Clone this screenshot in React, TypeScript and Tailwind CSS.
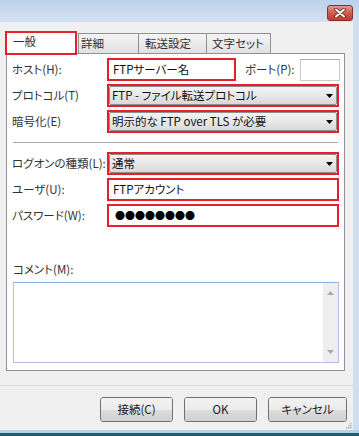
import { ReactNode } from 'react';

const font = "font-['Noto_Sans_CJK_JP',sans-serif] [font-feature-settings:'palt']";

function Arrow() {
  return (
    <svg width="7" height="4" viewBox="0 0 7 4" className="shrink-0">
      <path d="M0 0h7L3.5 4z" fill="#000" />
    </svg>
  );
}

function TextBox({ width, children }: { width: string; children?: ReactNode }) {
  return (
    <div className={`${width} h-[23px] border-2 border-[#e3202b] bg-white flex items-center pl-[4px] text-[11.5px] text-[#111] whitespace-nowrap`}>
      {children}
    </div>
  );
}

function Combo({ value }: { value: string }) {
  return (
    <div className="w-[232px] h-[23px] border-2 border-[#e3202b] flex">
      <div className="flex-1 flex items-center justify-between pl-[2px] pr-[3px] border border-[#8e8e8e] rounded-[2px] bg-gradient-to-b from-[#f3f3f3] via-[#e8e8e8] to-[#d9d9d9] text-[11.5px] text-[#111] whitespace-nowrap">
        <span>{value}</span>
        <Arrow />
      </div>
    </div>
  );
}

function Row({ label, children }: { label: string; children: ReactNode }) {
  return (
    <div className="flex items-center">
      <div className="w-[95px] text-[11.5px] text-[#333] whitespace-nowrap">{label}</div>
      {children}
    </div>
  );
}

function Button({ label, width }: { label: string; width: string }) {
  return (
    <div className={`${width} h-[25px] rounded-[3px] border border-[#707070] flex flex-col overflow-hidden relative`}>
      <div className="h-1/2 bg-gradient-to-b from-[#f2f2f2] to-[#ebebeb]" />
      <div className="h-1/2 bg-gradient-to-b from-[#dddddd] to-[#cfcfcf]" />
      <span className="absolute inset-0 flex items-center justify-center text-[11.5px] text-[#222]">{label}</span>
    </div>
  );
}

export default function App() {
  return (
    <div className={`w-[359px] h-[436px] flex flex-col overflow-hidden bg-[#c8dbf0] ${font}`}>
      {/* title bar */}
      <div className="h-[22px] shrink-0 bg-gradient-to-b from-[#bcd1e9] to-[#d2e2f3] flex justify-end pt-[5px] pr-[6px]">
        <div className="w-[26px] h-[16px] rounded-[3px] border border-[#8a3027] bg-gradient-to-b from-[#e29a90] via-[#cf5a4e] to-[#c2392d] flex items-center justify-center">
          <svg width="12" height="10" viewBox="0 0 12 10">
            <path d="M2 1.5l8 7M10 1.5l-8 7" stroke="#5b1c16" strokeWidth="3.6" strokeLinecap="round" />
            <path d="M2 1.5l8 7M10 1.5l-8 7" stroke="#fff" strokeWidth="2" strokeLinecap="round" />
          </svg>
        </div>
      </div>

      <div className="flex h-[408px] shrink-0">
        {/* client */}
        <div className="w-[353px] bg-[#f0f0f0] flex flex-col">
          {/* tabs */}
          <div className="mt-[9px] h-[22px] flex items-end pl-[5px] text-[11.5px] text-[#333] whitespace-nowrap">
            <div className="relative z-10 w-[72px] h-[24px] -mb-[2px] border-2 border-[#e3202b] bg-white flex items-center pl-[6px] pb-[2px]">
              一般
            </div>
            <div className="ml-[1px] w-[61px] h-[20px] border border-b-0 border-[#8e9197] bg-gradient-to-b from-[#f4f4f4] to-[#e1e1e1] flex items-center pl-[2px]">
              詳細
            </div>
            <div className="w-[68px] h-[20px] border border-l-0 border-b-0 border-[#8e9197] bg-gradient-to-b from-[#f4f4f4] to-[#e1e1e1] flex items-center pl-[6px]">
              転送設定
            </div>
            <div className="w-[64px] h-[20px] border border-l-0 border-b-0 border-[#8e9197] bg-gradient-to-b from-[#f4f4f4] to-[#e1e1e1] flex items-center pl-[5px]">
              文字セット
            </div>
          </div>

          {/* panel */}
          <div className="ml-[6px] w-[339px] h-[318px] border border-[#8e9197] bg-white flex flex-col pl-[5px]">
            <div className="mt-[4px] flex items-center">
              <div className="w-[95px] text-[11.5px] text-[#333] whitespace-nowrap">ホスト(H):</div>
              <TextBox width="w-[129px]">FTPサーバー名</TextBox>
              <div className="ml-[9px] text-[11.5px] text-[#333] whitespace-nowrap">ポート(P):</div>
              <div className="ml-auto mr-[4px] w-[40px] h-[22px] border border-[#c9c9c9] border-t-[#abadb3] bg-white" />
            </div>
            <div className="mt-[3px]">
              <Row label="プロトコル(T)">
                <Combo value="FTP - ファイル転送プロトコル" />
              </Row>
            </div>
            <div className="mt-[3px]">
              <Row label="暗号化(E)">
                <Combo value="明示的な FTP over TLS が必要" />
              </Row>
            </div>

            <div className="mt-[9px] ml-[1px] w-[325px] h-px bg-[#a6a6a6]" />

            <div className="mt-[9px]">
              <Row label="ログオンの種類(L):">
                <Combo value="通常" />
              </Row>
            </div>
            <div className="mt-[3px]">
              <Row label="ユーザ(U):">
                <TextBox width="w-[232px]">FTPアカウント</TextBox>
              </Row>
            </div>
            <div className="mt-[3px]">
              <Row label="パスワード(W):">
                <TextBox width="w-[232px]">
                  <span className="pl-[2px] text-[10px] leading-none [font-feature-settings:normal] text-black">●●●●●●●●</span>
                </TextBox>
              </Row>
            </div>

            <div className="mt-[34px] h-[16px] ml-[1px] text-[11.5px] text-[#333] leading-[16px]">コメント(M):</div>

            <div className="mt-[5px] ml-[1px] w-[326px] h-[81px] border border-[#abc4df] border-t-[#8fb0d4] bg-white flex justify-end">
              <div className="w-[15px] bg-[#eeeeee] flex flex-col items-center justify-between py-[8px]">
                <svg width="7" height="4" viewBox="0 0 7 4">
                  <path d="M0 4h7L3.5 0z" fill="#a8a8a8" />
                </svg>
                <svg width="7" height="4" viewBox="0 0 7 4">
                  <path d="M0 0h7L3.5 4z" fill="#a8a8a8" />
                </svg>
              </div>
            </div>
          </div>

          <div className="mt-[14px] h-px bg-[#dcdcdc]" />

          {/* buttons */}
          <div className="mt-[11px] flex justify-end gap-[11px] pr-[6px]">
            <Button label="接続(C)" width="w-[73px]" />
            <Button label="OK" width="w-[73px]" />
            <Button label="キャンセル" width="w-[79px]" />
          </div>
          <div className="flex-1 flex justify-end items-end pr-[1px] pb-[1px]">
            <svg width="6" height="6" viewBox="0 0 6 6">
              <rect x="4" y="0" width="1.5" height="1.5" fill="#b5b5b5" />
              <rect x="2" y="2" width="1.5" height="1.5" fill="#b5b5b5" />
              <rect x="4" y="2" width="1.5" height="1.5" fill="#b5b5b5" />
              <rect x="0" y="4" width="1.5" height="1.5" fill="#b5b5b5" />
              <rect x="2" y="4" width="1.5" height="1.5" fill="#b5b5b5" />
              <rect x="4" y="4" width="1.5" height="1.5" fill="#b5b5b5" />
            </svg>
          </div>
        </div>
        {/* right frame */}
        <div className="flex-1 bg-[#cddff2]" />
      </div>

      <div className="h-[3px] shrink-0 bg-[#b8d2ec]" />
      <div className="flex-1 bg-[#1f5e6b]" />
    </div>
  );
}
